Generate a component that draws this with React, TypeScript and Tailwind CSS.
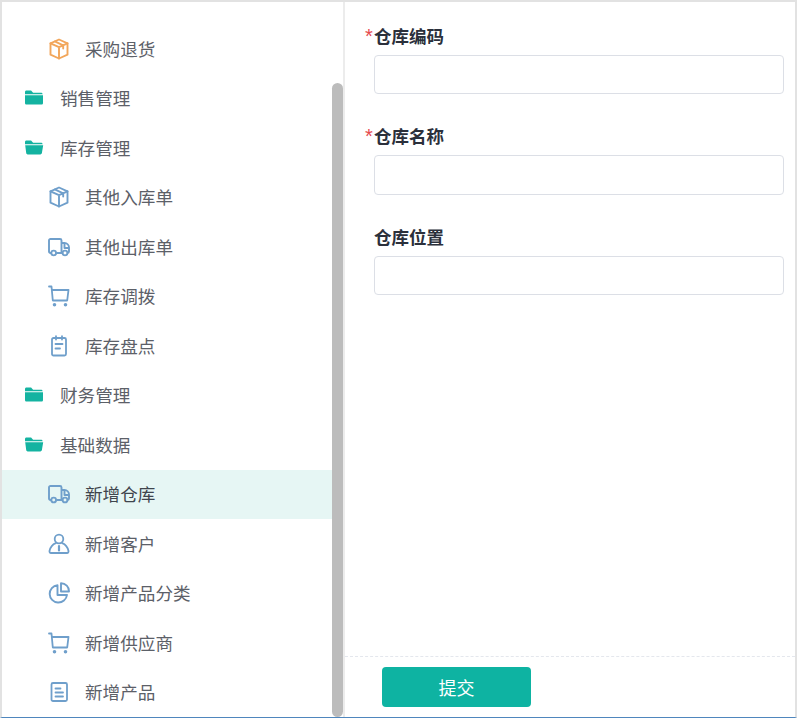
const font = "[font-family:'Noto_Sans_CJK_SC','Liberation_Sans',sans-serif]";

function Folder({ open }: { open?: boolean }) {
  return (
    <svg width="20" height="16" viewBox="0 0 20 16" className="text-[#14b3a1]">
      <path d="M1 2.500C1 1.600 1.600 1 2.500 1h4.600l2 2.200H17c1 0 1.700.7 1.700 1.600H1z" fill="currentColor" />
      {open ? (
        <path d="M1.200 5.800h18l-1.300 7.800c-.2.9-.8 1.400-1.600 1.400H3.700c-.8 0-1.400-.5-1.500-1.400z" fill="currentColor" />
      ) : (
        <path d="M1 5.800h18v7.600c0 1-.7 1.600-1.600 1.600H2.600C1.700 15 1 14.400 1 13.400z" fill="currentColor" />
      )}
    </svg>
  );
}

function IconBox({ color }: { color: string }) {
  return (
    <svg width="22" height="22" viewBox="0 0 22 22" fill="none" stroke={color} strokeWidth="1.900" strokeLinejoin="round" strokeLinecap="round">
      <path d="M11 1.500l8.500 3.800v11.400L11 20.500l-8.500-3.800V5.300z" />
      <path d="M2.500 5.300L11 9.200l8.500-3.900M11 9.200v11.300M6.800 3.400l8.400 3.900v3.200" />
    </svg>
  );
}

function IconTruck() {
  return (
    <svg width="22" height="22" viewBox="0 0 22 22" fill="none" stroke="#6f9fcb" strokeWidth="1.900" strokeLinejoin="round">
      <path d="M3 17H2.500C1.700 17 1 16.300 1 15.500V4.500C1 3.700 1.700 3 2.500 3h9.500c.8 0 1.500.7 1.500 1.500V17H8.500" />
      <path d="M13.500 7h3c2.500 0 4.500 2 4.500 4.500v4c0 .8-.7 1.500-1.500 1.500M14.500 17h-1" />
      <path d="M16.500 7.500V12H21" />
      <circle cx="5.700" cy="17" r="2.400" />
      <circle cx="17" cy="17" r="2.400" />
    </svg>
  );
}

function IconCart() {
  return (
    <svg width="22" height="22" viewBox="0 0 22 22" fill="none" stroke="#6f9fcb" strokeWidth="1.800" strokeLinejoin="round" strokeLinecap="round">
      <path d="M1 1.500h2.500L4.800 15.500h14.400L20.500 5H3.900" />
      <circle cx="6.500" cy="19.800" r=".9" fill="#6f9fcb" />
      <circle cx="17.500" cy="19.800" r=".9" fill="#6f9fcb" />
    </svg>
  );
}

function IconClipboard() {
  return (
    <svg width="22" height="22" viewBox="0 0 22 22" fill="none" stroke="#6f9fcb" strokeWidth="1.800" strokeLinecap="round" strokeLinejoin="round">
      <rect x="4" y="3" width="14" height="17.500" rx="1.500" />
      <path d="M8 1.200v3.300M14 1.200v3.300M7.500 9h7M7.500 13.500h4.500" />
    </svg>
  );
}

function IconUser() {
  return (
    <svg width="22" height="22" viewBox="0 0 22 22" fill="none" stroke="#6f9fcb" strokeWidth="1.800" strokeLinejoin="round" strokeLinecap="round">
      <circle cx="11" cy="6" r="4.300" />
      <path d="M7.800 10.200C4.500 11.500 2.300 14.500 1.500 18c-.2 1 .4 2 1.500 2h16c1.100 0 1.700-1 1.500-2-.8-3.500-3-6.500-6.300-7.800" />
      <path d="M11 13v4.500" strokeWidth="2.200" />
    </svg>
  );
}

function IconPie() {
  return (
    <svg width="22" height="22" viewBox="0 0 22 22" fill="none" stroke="#6f9fcb" strokeWidth="1.900" strokeLinejoin="round">
      <path d="M9.500 3.200A8.700 8.700 0 1 0 19 13h-9.500z" />
      <path d="M13 1.200A8 8 0 0 1 21 9.500h-8z" />
    </svg>
  );
}

function IconDoc() {
  return (
    <svg width="22" height="22" viewBox="0 0 22 22" fill="none" stroke="#6f9fcb" strokeWidth="1.800" strokeLinecap="round" strokeLinejoin="round">
      <rect x="3.500" y="2" width="15.500" height="18" rx="1.500" />
      <path d="M7.500 7.500h5M7.500 11.500h7.500M7.500 15.500h7.500" />
    </svg>
  );
}

function Group({ label, open }: { label: string; open?: boolean }) {
  return (
    <div className="flex h-[49.5px] items-center pl-[22px]">
      <div className="flex w-[36px] -translate-y-[0.5px] items-center">
        <Folder open={open} />
      </div>
      <span className="text-[17.6px] text-[#5c6068]">{label}</span>
    </div>
  );
}

function Item({ label, icon, active }: { label: string; icon: React.ReactNode; active?: boolean }) {
  return (
    <div className={active ? "flex h-[49.5px] items-center bg-[#e6f6f4] pl-[46px]" : "flex h-[49.5px] items-center pl-[46px]"}>
      <div className="flex w-[37px] items-center">{icon}</div>
      <span className={active ? "text-[17.6px] text-[#3f454d]" : "text-[17.6px] text-[#5c6068]"}>{label}</span>
    </div>
  );
}

function Field({ label, required }: { label: string; required?: boolean }) {
  return (
    <div className="flex flex-col">
      <div className="relative flex h-[24px] items-center text-[17.5px] font-bold text-[#2b303b]">
        {required && <span className="absolute -left-[9px] -top-[3px] font-['Liberation_Sans'] text-[20px] font-normal text-[#e5484d]">*</span>}
        {label}
      </div>
      <div className="mt-[7px] h-[39.5px] w-[410px] rounded-[4px] border border-[#dcdfe6] bg-white" />
    </div>
  );
}

export default function App() {
  return (
    <div className={`${font} relative flex h-[718px] w-[797px] border-x-2 border-t-2 border-b border-x-[#e2e2e2] border-t-[#e2e2e2] border-b-[#4f86bd] bg-white`}>
      <div className="relative w-[343px] shrink-0 border-r-2 border-[#ececec]">
        <div className="w-[330px] pt-[22px]">
          <Item label="采购退货" icon={<IconBox color="#f2a65a" />} />
          <Group label="销售管理" />
          <Group label="库存管理" open />
          <Item label="其他入库单" icon={<IconBox color="#6f9fcb" />} />
          <Item label="其他出库单" icon={<IconTruck />} />
          <Item label="库存调拨" icon={<IconCart />} />
          <Item label="库存盘点" icon={<IconClipboard />} />
          <Group label="财务管理" />
          <Group label="基础数据" open />
          <Item label="新增仓库" icon={<IconTruck />} active />
          <Item label="新增客户" icon={<IconUser />} />
          <Item label="新增产品分类" icon={<IconPie />} />
          <Item label="新增供应商" icon={<IconCart />} />
          <Item label="新增产品" icon={<IconDoc />} />
        </div>
        <div className="absolute bottom-0 right-0 h-[634px] w-[11px] rounded-full bg-[#bcbcbc]" />
      </div>
      <div className="flex flex-1 flex-col">
        <div className="flex flex-1 flex-col gap-[30px] pl-[29px] pt-[21.75px]">
          <Field label="仓库编码" required />
          <Field label="仓库名称" required />
          <Field label="仓库位置" />
        </div>
        <div className="h-[61px] border-t border-dashed border-[#e4e7ed] pl-[37px] pt-[10px]">
          <button className="h-[40px] w-[149px] rounded-[4px] bg-[#0eb3a2] text-[18px] text-white">提交</button>
        </div>
      </div>
    </div>
  );
}
